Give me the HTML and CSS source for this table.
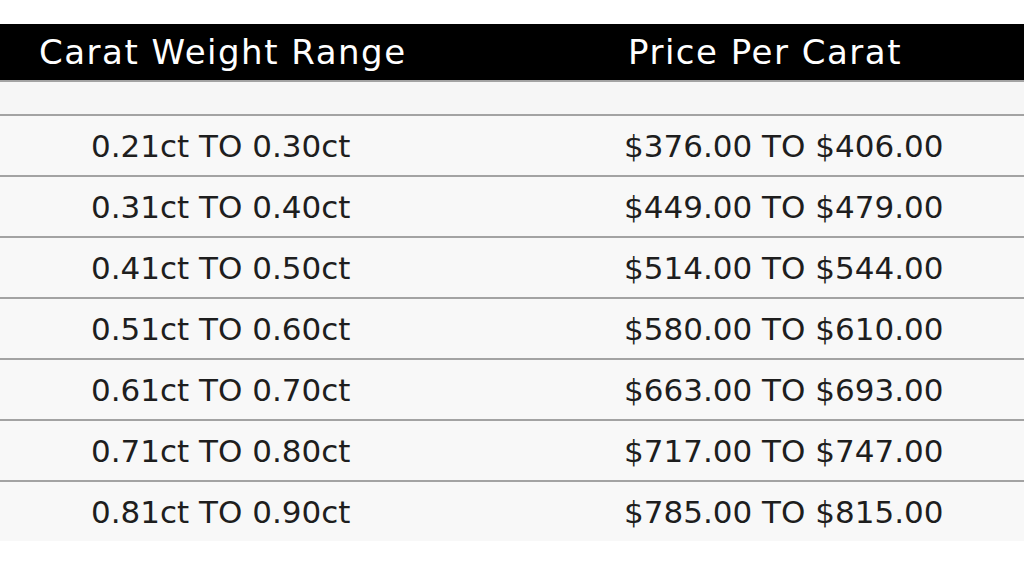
FILE: index.html
```html
<!DOCTYPE html>
<html>
<head>
<meta charset="utf-8">
<link rel="stylesheet" href="styles.css">
</head>
<body>
<div class="table">
  <div class="row head">
    <div class="cell c1">Carat Weight Range</div>
    <div class="cell c2">Price Per Carat</div>
  </div>
  <div class="row spacer"></div>
  <div class="row"><div class="cell c1">0.21ct TO 0.30ct</div><div class="cell c2">$376.00 TO $406.00</div></div>
  <div class="row"><div class="cell c1">0.31ct TO 0.40ct</div><div class="cell c2">$449.00 TO $479.00</div></div>
  <div class="row"><div class="cell c1">0.41ct TO 0.50ct</div><div class="cell c2">$514.00 TO $544.00</div></div>
  <div class="row"><div class="cell c1">0.51ct TO 0.60ct</div><div class="cell c2">$580.00 TO $610.00</div></div>
  <div class="row"><div class="cell c1">0.61ct TO 0.70ct</div><div class="cell c2">$663.00 TO $693.00</div></div>
  <div class="row"><div class="cell c1">0.71ct TO 0.80ct</div><div class="cell c2">$717.00 TO $747.00</div></div>
  <div class="row"><div class="cell c1">0.81ct TO 0.90ct</div><div class="cell c2">$785.00 TO $815.00</div></div>
</div>
</body>
</html>
```
FILE: styles.css
```css
html, body {
  margin: 0;
  padding: 0;
  background: #ffffff;
}
body {
  width: 1024px;
  height: 576px;
  overflow: hidden;
  font-family: "DejaVu Sans", sans-serif;
}
.table {
  margin-top: 24px;
  display: flex;
  flex-direction: column;
}
.row {
  display: grid;
  grid-template-columns: 530px 1fr;
  align-items: center;
  height: 61px;
  background: #f8f8f8;
  border-top: 2px solid #a3a3a3;
  box-sizing: border-box;
  color: #1e1e1e;
  font-size: 31px;
}
.row.head {
  height: 56px;
  background: #000;
  color: #fff;
  border-top: none;
  font-size: 34px;
  letter-spacing: 1.5px;
}
.row.spacer {
  height: 34px;
  background: #f6f6f6;
}
.cell { white-space: nowrap; }
.head .c1 { padding-left: 39px; }
.head .c2 { padding-left: 98px; }
.c1 { padding-left: 91px; }
.c2 { padding-left: 94px; }
```
